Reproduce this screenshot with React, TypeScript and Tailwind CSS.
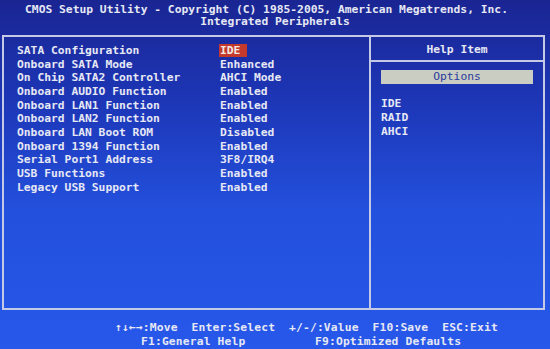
const settings = [
  ["SATA Configuration", "IDE"],
  ["Onboard SATA Mode", "Enhanced"],
  ["On Chip SATA2 Controller", "AHCI Mode"],
  ["Onboard AUDIO Function", "Enabled"],
  ["Onboard LAN1 Function", "Enabled"],
  ["Onboard LAN2 Function", "Enabled"],
  ["Onboard LAN Boot ROM", "Disabled"],
  ["Onboard 1394 Function", "Enabled"],
  ["Serial Port1 Address", "3F8/IRQ4"],
  ["USB Functions", "Enabled"],
  ["Legacy USB Support", "Enabled"],
];

const options = ["IDE", "RAID", "AHCI"];

export default function App() {
  return (
    <div className="w-[550px] h-[349px] overflow-hidden flex flex-col bg-[linear-gradient(180deg,#1a2592_0%,#1d37b8_30%,#2350dc_60%,#2758ea_100%)] font-['DejaVu_Sans_Mono',monospace] font-bold text-[11.3px] leading-[12px] text-[#e6e8f4]">
      {/* title */}
      <div className="pt-[4px] h-[35px] flex flex-col items-center">
        <div className="whitespace-pre pr-[17px]">
          CMOS Setup Utility - Copyright (C) 1985-2005, American Megatrends, Inc.
        </div>
        <div className="whitespace-pre">Integrated Peripherals</div>
      </div>

      {/* main frame */}
      <div className="ml-[2px] w-[543px] h-[275px] border-2 border-[#c4cae6] flex">
        <div className="w-[365px] pl-[13px] pt-[7px] flex flex-col">
          {settings.map(([label, value], i) => (
            <div key={label} className="flex h-[13.7px] items-center">
              <span className="w-[202px] whitespace-pre">{label}</span>
              <span
                className={
                  i === 0
                    ? "bg-[#c33a2c] pl-[1px] pr-[7px] h-[13px] flex items-center text-[#f4e8e4]"
                    : "px-[1px]"
                }
              >
                {value}
              </span>
            </div>
          ))}
        </div>
        <div className="flex-1 border-l-2 border-[#c4cae6] flex flex-col">
          <div className="h-[25px] pt-[2px] border-b-2 border-[#c4cae6] flex items-center justify-center">
            Help Item
          </div>
          <div className="px-[10px] pt-[8px]">
            <div className="h-[14px] bg-[#c9cdc2] text-[#2a3a9e] flex items-center justify-center font-normal">
              Options
            </div>
            <div className="pt-[13px] flex flex-col">
              {options.map((o) => (
                <div key={o} className="h-[14px] flex items-center">
                  {o}
                </div>
              ))}
            </div>
          </div>
        </div>
      </div>

      {/* footer */}
      <div className="pt-[11px] flex flex-col tracking-[0.16px]">
        <div className="whitespace-pre pl-[115px] h-[14px] flex items-center">
          {"↑↓←→:Move  Enter:Select  +/-/:Value  F10:Save  ESC:Exit"}
        </div>
        <div className="whitespace-pre pl-[141px] h-[14px] flex items-center">
          {"F1:General Help          F9:Optimized Defaults"}
        </div>
      </div>
      <div className="flex-1 bg-[#0a0a14]" />
    </div>
  );
}
